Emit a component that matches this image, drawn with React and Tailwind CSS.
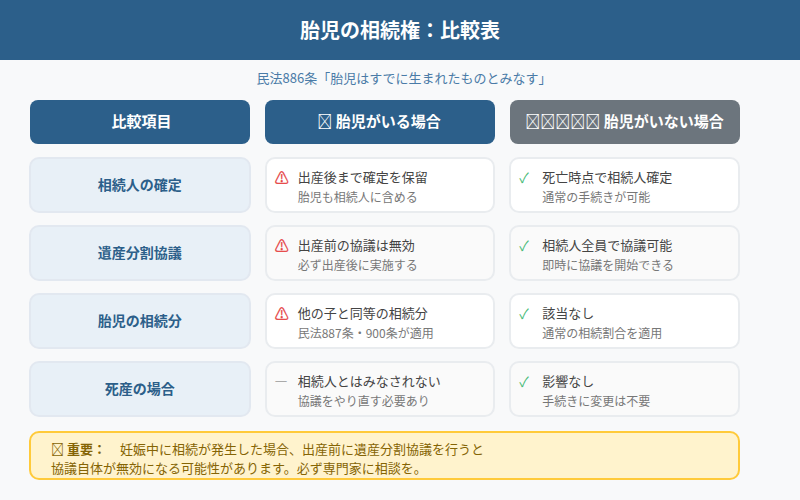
const rows = [
  { label: "相続人の確定", aIcon: "⚠", aKind: "warn", a1: "出産後まで確定を保留", a2: "胎児も相続人に含める", b1: "死亡時点で相続人確定", b2: "通常の手続きが可能" },
  { label: "遺産分割協議", aIcon: "⚠", aKind: "warn", a1: "出産前の協議は無効", a2: "必ず出産後に実施する", b1: "相続人全員で協議可能", b2: "即時に協議を開始できる" },
  { label: "胎児の相続分", aIcon: "⚠", aKind: "warn", a1: "他の子と同等の相続分", a2: "民法887条・900条が適用", b1: "該当なし", b2: "通常の相続割合を適用" },
  { label: "死産の場合", aIcon: "—", aKind: "dash", a1: "相続人とはみなされない", a2: "協議をやり直す必要あり", b1: "影響なし", b2: "手続きに変更は不要" },
];

function Cell({ icon, iconClass, line1, line2, shaded }) {
  return (
    <div className={`w-[231px] h-[56px] rounded-[10px] border-2 border-[#e9ecef] flex items-center pl-[8px] ${shaded ? "bg-[#fafafa]" : "bg-white"}`}>
      <span className={`w-[23px] shrink-0 text-[14px] leading-[20px] ${iconClass}`}>{icon}</span>
      <div className="mt-[3px]">
        <div className="text-[13px] leading-[20px] text-[#444444]">{line1}</div>
        <div className="text-[12px] leading-[19px] text-[#777777]">{line2}</div>
      </div>
    </div>
  );
}

export default function App() {
  return (
    <div className="w-[800px] h-[500px] bg-[#f8f9fa] font-['Noto_Sans_CJK_JP','Noto_Sans',sans-serif]">
      <header className="h-[60px] bg-[#2c5f8a] flex items-center justify-center text-white text-[20px] font-bold">
        胎児の相続権：比較表
      </header>
      <p className="h-[40px] pb-[5px] pl-[8px] flex items-center justify-center text-[13px] text-[#4a7ba7]">
        民法886条「胎児はすでに生まれたものとみなす」
      </p>
      <div className="pl-[30px] w-[740px] flex flex-col">
        <div className="flex gap-[15px] text-white text-[15px] font-bold">
          <div className="w-[220px] h-[44px] pb-[2px] pl-[3px] rounded-lg bg-[#2c5f8a] flex items-center justify-center">比較項目</div>
          <div className="w-[230px] h-[44px] pb-[2px] pr-[2px] rounded-lg bg-[#2c5f8a] flex items-center justify-center">{"\uE000"} 胎児がいる場合</div>
          <div className="w-[230px] h-[44px] pb-[2px] pr-[1px] rounded-lg bg-[#6c757d] flex items-center justify-center">{"\uE000\uE000\uE000\uE000\uE000"} 胎児がいない場合</div>
        </div>
        <div className="mt-[13px] flex flex-col gap-[12px]">
          {rows.map((r, i) => (
            <div key={r.label} className="flex gap-[14px] -ml-px">
              <div className="w-[222px] h-[56px] pb-[2px] rounded-[10px] border-2 border-[#e2e8f0] bg-[#e8f0f7] flex items-center justify-center text-[14px] font-bold text-[#2c5f8a]">
                {r.label}
              </div>
              <Cell icon={r.aIcon} iconClass={r.aKind === "warn" ? "-mt-[17px] text-[#e53e3e] [-webkit-text-stroke:0.3px_#e53e3e]" : "-mt-[20px] text-[#aaaaaa]"} line1={r.a1} line2={r.a2} shaded={i % 2 === 1} />
              <Cell icon="✓" iconClass="-mt-[17px] text-[#48bb78]" line1={r.b1} line2={r.b2} shaded={i % 2 === 1} />
            </div>
          ))}
        </div>
        <div className="mt-[14px] w-[711px] -ml-px h-[49px] pt-[4px] rounded-[10px] border-2 border-[#ffca3a] bg-[#fff3cd] pl-[20px] flex flex-col justify-center text-[13px] leading-[19px] text-[#856404]">
          <div className="whitespace-pre-wrap"><span className="font-bold">{"\uE000"} 重要：</span><span className="ml-[1px]">　妊娠中に相続が発生した場合、出産前に遺産分割協議を行うと</span></div>
          <div>協議自体が無効になる可能性があります。必ず専門家に相談を。</div>
        </div>
      </div>
    </div>
  );
}
